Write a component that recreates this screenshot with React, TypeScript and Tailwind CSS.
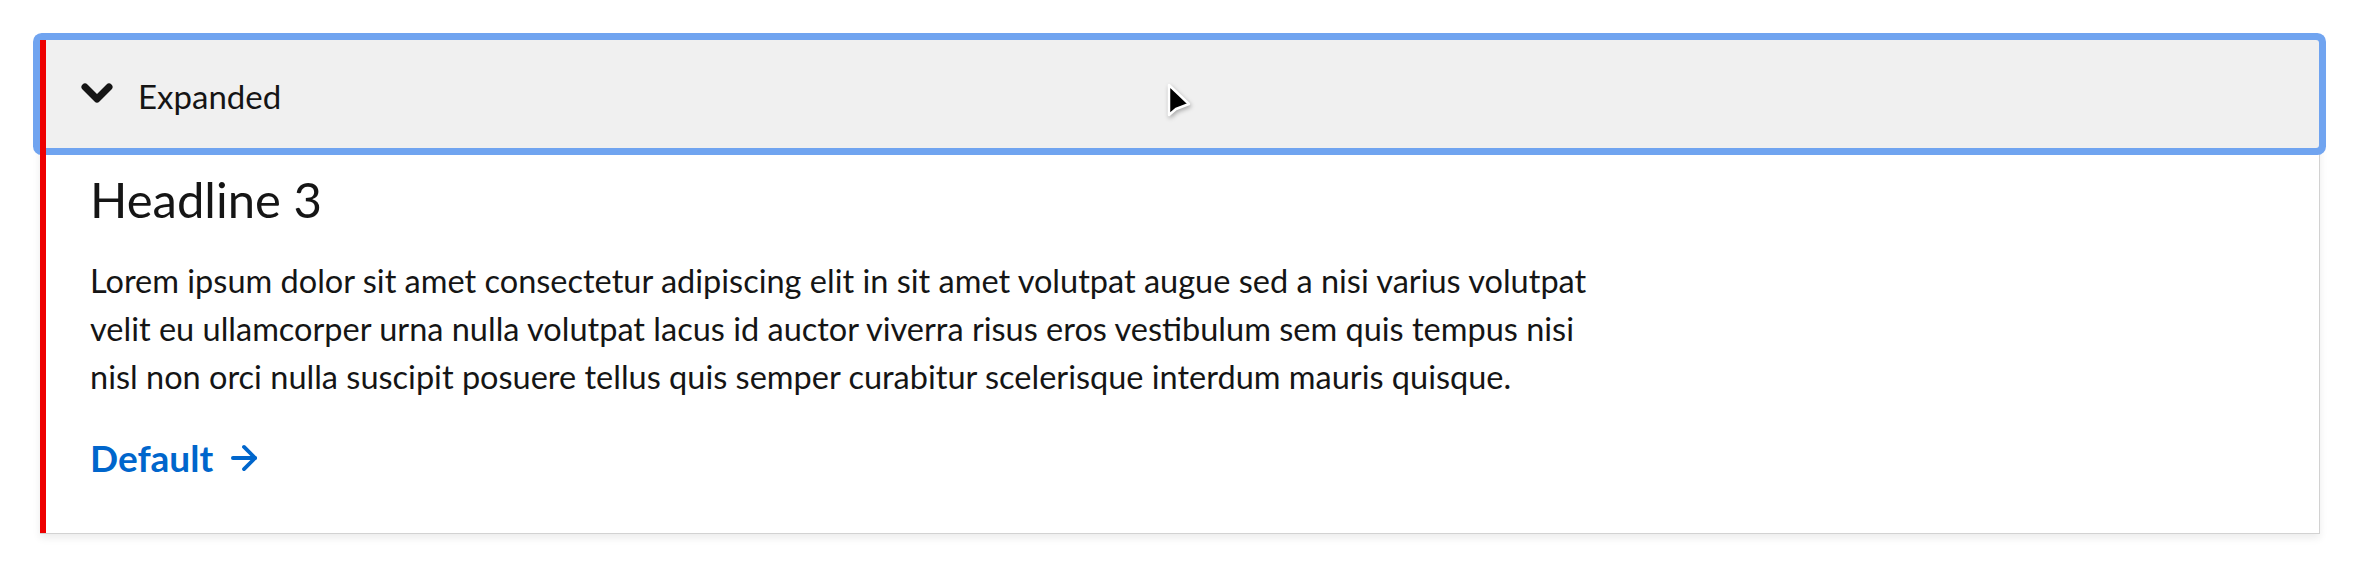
import React, { useState } from "react";
import { ArrowRight } from "lucide-react";

const lines = [
  "Lorem ipsum dolor sit amet consectetur adipiscing elit in sit amet volutpat augue sed a nisi varius volutpat",
  "velit eu ullamcorper urna nulla volutpat lacus id auctor viverra risus eros vestibulum sem quis tempus nisi",
  "nisl non orci nulla suscipit posuere tellus quis semper curabitur scelerisque interdum mauris quisque.",
];

function Chevron() {
  return (
    <svg width="34" height="24" viewBox="0 0 34 24" className="shrink-0">
      <polyline
        points="5,5 17,17 29,5"
        fill="none"
        stroke="#151515"
        strokeWidth="7"
        strokeLinecap="round"
        strokeLinejoin="round"
      />
    </svg>
  );
}

function Cursor() {
  return (
    <svg
      width="30"
      height="40"
      viewBox="0 0 30 40"
      className="absolute left-[1166px] top-[82px] z-20 drop-shadow-[1px_2px_2px_rgba(0,0,0,0.3)]"
    >
      <polygon points="3,3 3,33 10,27 23,22" fill="#000" stroke="#fff" strokeWidth="2.5" strokeLinejoin="round" />
    </svg>
  );
}

export default function App() {
  const [open, setOpen] = useState(true);

  return (
    <div className="relative min-h-[574px] bg-white p-10 font-['Lato',sans-serif] text-[#151515]">
      <Cursor />
      {/* Acordeón */}
      <div className="relative border-r border-b border-[#d2d2d2] bg-white shadow-[0_4px_8px_rgba(0,0,0,0.08)]">
        <div className="absolute inset-y-0 left-0 z-10 w-[6px] bg-[#ee0000]" />
        <button
          onClick={() => setOpen(!open)}
          className="relative z-[5] flex h-[108px] w-full items-center gap-[24px] rounded-[3px] bg-[#f0f0f0] pl-[40px] text-left shadow-[0_0_0_7px_#70a4f0]"
        >
          <Chevron />
          <span className="pt-[4px] text-[33px] leading-none">Expanded</span>
        </button>
        {open && (
          <div className="pt-[22px] pb-[48px] pl-[50px] pr-10">
            <h3 className="text-[49px] leading-[1.2]">Headline 3</h3>
            <p className="mt-[28px] text-[32.5px] leading-[48px]">
              {lines.map((l, i) => (
                <React.Fragment key={i}>
                  {l}
                  {i < lines.length - 1 && <br />}
                </React.Fragment>
              ))}
            </p>
            <a href="#" className="mt-[29px] inline-flex items-center gap-[12px] text-[37px] font-bold text-[#0066cc]">
              Default
              <ArrowRight className="h-[38px] w-[38px]" strokeWidth={2.4} />
            </a>
          </div>
        )}
      </div>
    </div>
  );
}
